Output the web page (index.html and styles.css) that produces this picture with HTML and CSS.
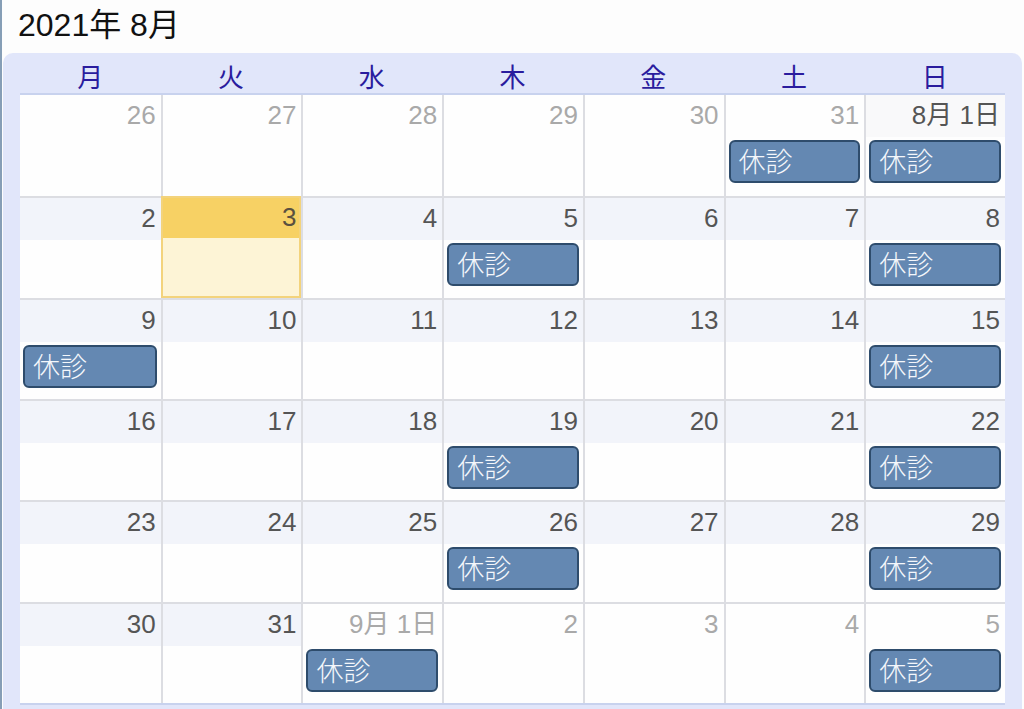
FILE: index.html
```html
<!DOCTYPE html>
<html lang="ja">
<head>
<meta charset="utf-8">
<title>2021年 8月</title>
<link rel="stylesheet" href="styles.css">
</head>
<body>
<div class="page">
  <h1 class="title">2021年 8月</h1>
  <div class="panel">
    <div class="weekdays">
      <div>月</div><div>火</div><div>水</div><div>木</div><div>金</div><div>土</div><div>日</div>
    </div>
    <div class="grid">
      <div class="cell"><div class="num other">26</div></div>
      <div class="cell"><div class="num other">27</div></div>
      <div class="cell"><div class="num other">28</div></div>
      <div class="cell"><div class="num other">29</div></div>
      <div class="cell"><div class="num other">30</div></div>
      <div class="cell"><div class="num other">31</div><div class="event">休診</div></div>
      <div class="cell"><div class="num first">8月 1日</div><div class="event">休診</div></div>

      <div class="cell"><div class="num">2</div></div>
      <div class="cell today"><div class="num">3</div></div>
      <div class="cell"><div class="num">4</div></div>
      <div class="cell"><div class="num">5</div><div class="event">休診</div></div>
      <div class="cell"><div class="num">6</div></div>
      <div class="cell"><div class="num">7</div></div>
      <div class="cell"><div class="num">8</div><div class="event">休診</div></div>

      <div class="cell"><div class="num">9</div><div class="event">休診</div></div>
      <div class="cell"><div class="num">10</div></div>
      <div class="cell"><div class="num">11</div></div>
      <div class="cell"><div class="num">12</div></div>
      <div class="cell"><div class="num">13</div></div>
      <div class="cell"><div class="num">14</div></div>
      <div class="cell"><div class="num">15</div><div class="event">休診</div></div>

      <div class="cell"><div class="num">16</div></div>
      <div class="cell"><div class="num">17</div></div>
      <div class="cell"><div class="num">18</div></div>
      <div class="cell"><div class="num">19</div><div class="event">休診</div></div>
      <div class="cell"><div class="num">20</div></div>
      <div class="cell"><div class="num">21</div></div>
      <div class="cell"><div class="num">22</div><div class="event">休診</div></div>

      <div class="cell"><div class="num">23</div></div>
      <div class="cell"><div class="num">24</div></div>
      <div class="cell"><div class="num">25</div></div>
      <div class="cell"><div class="num">26</div><div class="event">休診</div></div>
      <div class="cell"><div class="num">27</div></div>
      <div class="cell"><div class="num">28</div></div>
      <div class="cell"><div class="num">29</div><div class="event">休診</div></div>

      <div class="cell"><div class="num">30</div></div>
      <div class="cell"><div class="num">31</div></div>
      <div class="cell"><div class="num other">9月 1日</div><div class="event">休診</div></div>
      <div class="cell"><div class="num other">2</div></div>
      <div class="cell"><div class="num other">3</div></div>
      <div class="cell"><div class="num other">4</div></div>
      <div class="cell"><div class="num other">5</div><div class="event">休診</div></div>
    </div>
  </div>
</div>
</body>
</html>
```

FILE: styles.css
```css
html, body {
  margin: 0;
  padding: 0;
  background: #fdfdfd;
}
body {
  font-family: "Liberation Sans", Arial, "Noto Sans CJK JP", sans-serif;
  width: 1024px;
  height: 709px;
  overflow: hidden;
}
.page {
  border-left: 2px solid #869eb6;
  height: 709px;
  box-sizing: border-box;
  display: flex;
  flex-direction: column;
}
.title {
  margin: 0;
  padding: 7px 0 0 16px;
  height: 53px;
  box-sizing: border-box;
  font-size: 32px;
  font-weight: normal;
  color: #111;
  line-height: 36px;
}
.panel {
  flex: 1;
  margin: 0 2px 0 1px;
  background: #e1e6fa;
  border-radius: 10px 10px 0 0;
  padding: 0 17px 0 17px;
  display: flex;
  flex-direction: column;
}
.weekdays {
  display: grid;
  grid-template-columns: repeat(7, 1fr);
  height: 40px;
  border-bottom: 2px solid #c8d2ee;
}
.weekdays div {
  text-align: center;
  font-size: 26px;
  line-height: 30px;
  padding-top: 10px;
  color: #2a1c9e;
}
.grid {
  display: grid;
  grid-template-columns: repeat(7, 1fr);
  grid-template-rows: repeat(6, 1fr);
  height: 608px;
  background: #fefefe;
  border-bottom: 2px solid #c8d2ee;
}
.cell {
  border-left: 2px solid #dcdde2;
  border-top: 2px solid #dcdde2;
  background: #fefefe;
  display: flex;
  flex-direction: column;
  min-width: 0;
  min-height: 0;
}
.cell:nth-child(7n+1) {
  border-left: none;
}
.cell:nth-child(-n+7) {
  border-top: none;
}
.num {
  height: 42px;
  flex: none;
  background: #f2f4fa;
  text-align: right;
  padding-right: 5px;
  font-size: 26px;
  line-height: 40px;
  color: #555;
  white-space: nowrap;
}
.num.other {
  color: #a9a9a9;
  background: #fefefe;
}
.num.first {
  background: #f9f9fa;
}
.cell.today {
  background: #fdf4d6;
  border: 2px solid #f3d37c;
}
.today .num {
  background: #f7d164;
  color: #5a5040;
  height: 40px;
  line-height: 38px;
  padding-right: 3px;
}
.event {
  margin: 3px 4px 0 3px;
  height: 43px;
  flex: none;
  box-sizing: border-box;
  background: #6488b2;
  border: 2px solid #2e4c6c;
  border-radius: 6px;
  color: #f4f7fb;
  font-size: 27px;
  line-height: 38px;
  padding-left: 8px;
  font-family: "Noto Sans CJK JP", sans-serif;
  font-weight: 300;
}
```
